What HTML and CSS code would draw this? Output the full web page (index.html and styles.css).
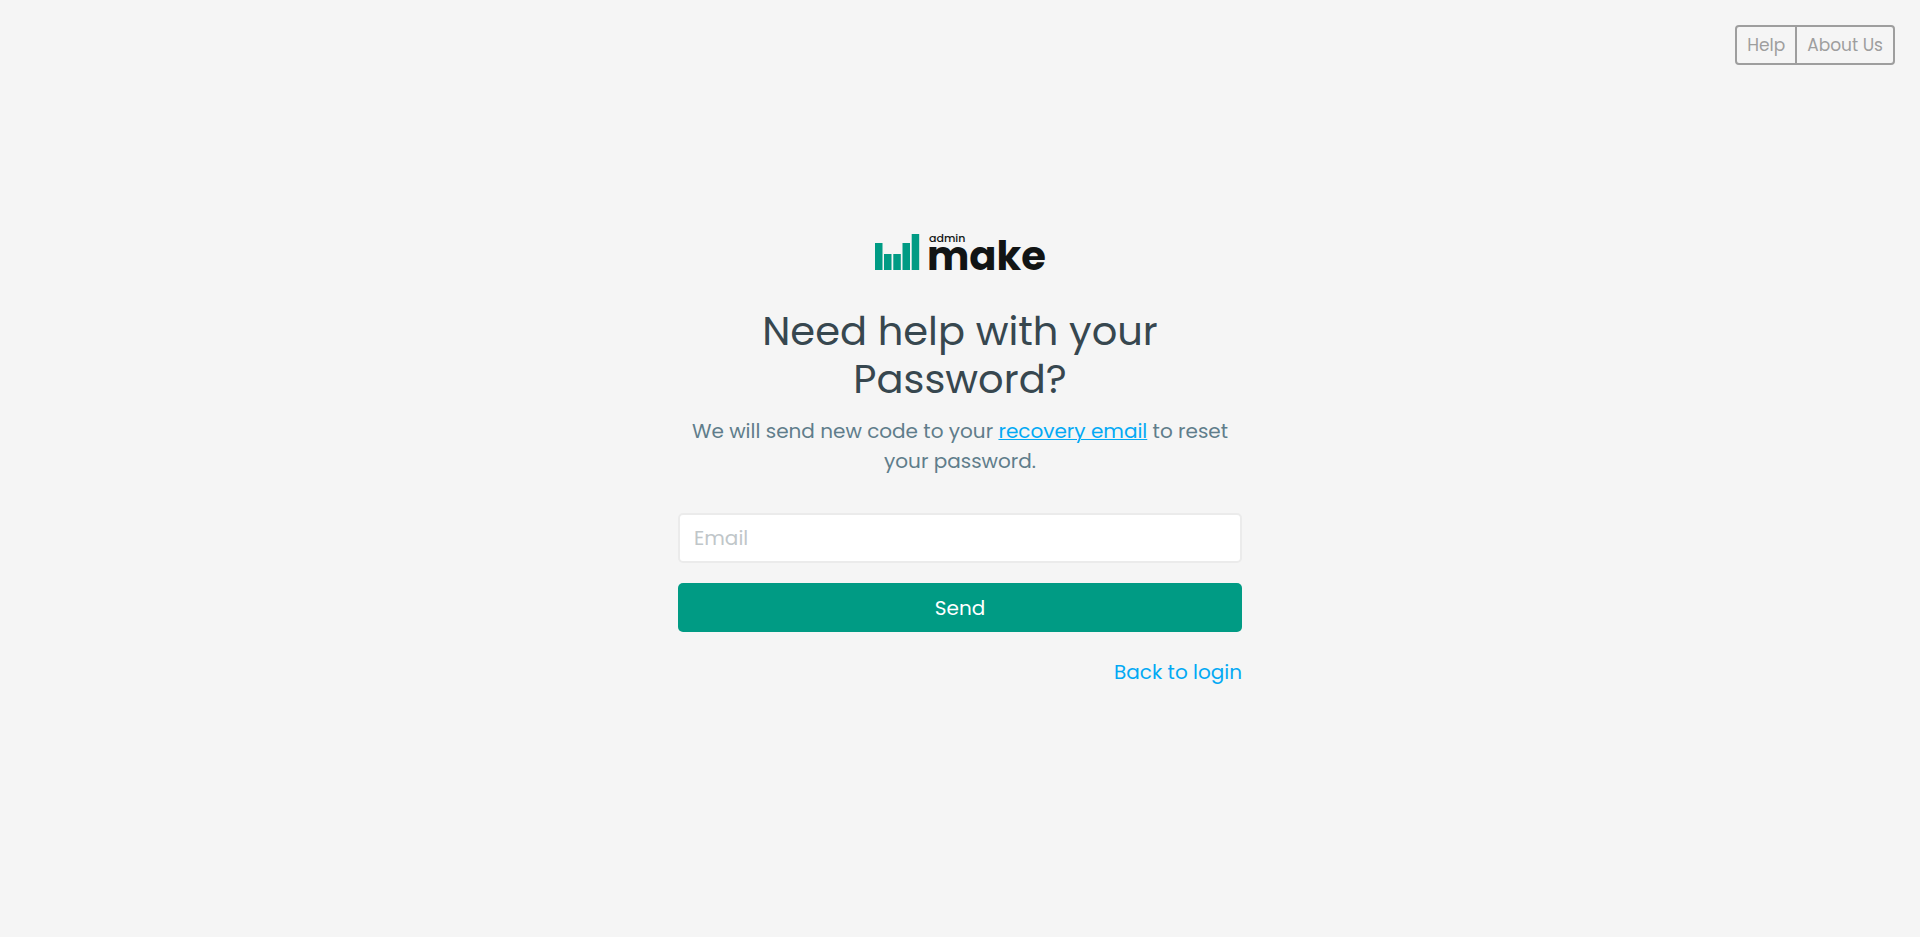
FILE: index.html
```html
<!DOCTYPE html>
<html lang="en">
<head>
  <meta charset="UTF-8">
  <meta name="viewport" content="width=device-width, initial-scale=1.0">
  <title>Forgot Password - Admin Make</title>
  <link rel="stylesheet" href="styles.css">
</head>
<body>
  <nav class="top-nav">
    <a href="#help">Help</a>
    <a href="#about">About Us</a>
  </nav>
  <main class="recover">
    <svg class="logo" viewBox="0 0 170 37" role="img" aria-label="admin make">
      <g class="logo-bars">
        <rect x="0" y="9" width="7.5" height="27" />
        <rect x="9" y="20" width="7.5" height="16" />
        <rect x="18.3" y="20" width="7.5" height="16" />
        <rect x="27.5" y="9" width="7.5" height="27" />
        <rect x="36.7" y="0" width="7.5" height="36" />
      </g>
      <text class="logo-small" x="54" y="8">admin</text>
      <text class="logo-big" x="52" y="36">make</text>
    </svg>
    <h1>Need help with your Password?</h1>
    <p>We will send new code to your <a href="#recovery">recovery email</a> to reset your password.</p>
    <form id="recoverForm">
      <input type="email" name="email" placeholder="Email" aria-label="Email" required>
      <button type="submit">Send</button>
    </form>
    <a class="back" href="#login">Back to login</a>
  </main>
</body>
</html>
```

FILE: styles.css
```css
* {
  box-sizing: border-box;
}

body {
  font-family: Poppins, Inter, sans-serif;
  font-size: 20px;
  line-height: 30px;
  background-color: #f5f5f5;
  color: #607d8b;
  margin: 0;
  min-height: 100vh;
  display: flex;
  align-items: center;
  justify-content: center;
}

a {
  color: #03a9f4;
  text-decoration-thickness: 1px;
}

.top-nav {
  position: absolute;
  top: 25px;
  right: 25px;
  display: flex;
  border: 2px solid #9e9e9e;
  border-radius: 4px;
  font-size: 17px;
}

.top-nav a {
  padding: 3px 10px;
  color: #9e9e9e;
  text-decoration: none;
}

.top-nav a + a {
  border-left: 2px solid #9e9e9e;
}

.recover {
  width: 100%;
  max-width: 564px;
  padding-bottom: 16px;
  display: flex;
  flex-direction: column;
  text-align: center;
}

.logo {
  width: 170px;
  height: 37px;
  align-self: center;
  overflow: visible;
}

.logo-bars {
  fill: #009b84;
}

.logo text {
  fill: #111414;
}

.logo-small {
  font-size: 11px;
  font-weight: 500;
}

.logo-big {
  font-size: 40px;
  font-weight: 700;
}

h1 {
  margin: 36px 60px 13px;
  font-size: 40px;
  font-weight: 400;
  line-height: 48px;
  color: #37474f;
}

p {
  margin: 0 0 37px;
}

form {
  display: flex;
  flex-direction: column;
  gap: 20px;
}

input {
  height: 50px;
  padding: 0 14px;
  border: 2px solid #ebebeb;
  border-radius: 5px;
  background: #fff;
  font: inherit;
  color: #37474f;
}

input::placeholder {
  color: #c0c6c9;
}

button {
  height: 49px;
  border: none;
  border-radius: 5px;
  background-color: #009b84;
  color: #fff;
  font: inherit;
  cursor: pointer;
}

button:hover {
  background-color: #008672;
}

.back {
  align-self: flex-end;
  margin-top: 25px;
  text-decoration: none;
}
```
